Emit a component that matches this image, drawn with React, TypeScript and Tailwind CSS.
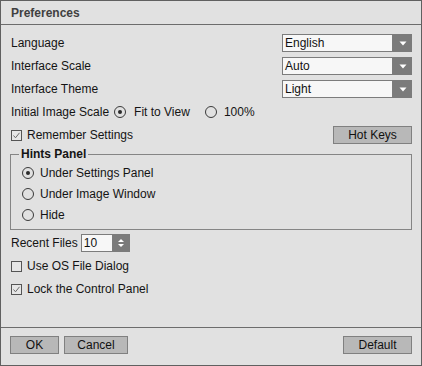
import React from "react";

function Radio({ checked }: { checked?: boolean }) {
  return (
    <span className="w-[12px] h-[12px] rounded-full border border-[#3a3a3a] flex items-center justify-center shrink-0">
      {checked && <span className="w-[4px] h-[4px] rounded-full bg-[#2a2a2a]" />}
    </span>
  );
}

function Check({ checked }: { checked?: boolean }) {
  return (
    <span className="w-[11px] h-[11px] border border-[#555] bg-[#e6e6e6] flex items-center justify-center shrink-0">
      {checked && (
        <svg width="9" height="9" viewBox="0 0 9 9">
          <path d="M1.5 4.5 L3.5 6.8 L7.5 1.8" fill="none" stroke="#6a6a6a" strokeWidth="1" />
        </svg>
      )}
    </span>
  );
}

function Select({ value }: { value: string }) {
  return (
    <div className="w-[130px] h-[18px] flex">
      <div className="flex-1 h-full bg-[#f7f7f7] border border-[#7c7c7c] flex items-center pl-[2px] text-[#111]">
        {value}
      </div>
      <div className="w-[19px] h-full bg-[#7b7b7b] flex items-center justify-center">
        <svg width="8" height="5" viewBox="0 0 8 5">
          <path d="M0.5 0.5 L7.5 0.5 L4 4.5 Z" fill="#ffffff" />
        </svg>
      </div>
    </div>
  );
}

function Btn({ w, children }: { w: string; children: React.ReactNode }) {
  return (
    <div className={`${w} h-[18px] bg-[#b8b8b8] border border-[#808080] flex items-center justify-center text-[#111]`}>
      {children}
    </div>
  );
}

export default function App() {
  return (
    <div className="w-[422px] h-[366px] bg-[#e1e1e1] border border-[#606060] flex flex-col text-[12px] leading-none text-[#141414] font-['Liberation_Sans',Arial,sans-serif]">
      <div className="h-[24px] shrink-0 border-b border-[#6c6c6c] pl-[10px] flex items-center font-bold text-[#404040]">
        Preferences
      </div>
      <div className="flex-1 flex flex-col pl-[9px] pr-[9px] pt-[9px]">
        <div className="h-[18px] flex items-center justify-between">
          <span className="pl-[1px]">Language</span>
          <Select value="English" />
        </div>
        <div className="h-[18px] mt-[5px] flex items-center justify-between">
          <span className="pl-[1px]">Interface Scale</span>
          <Select value="Auto" />
        </div>
        <div className="h-[18px] mt-[5px] flex items-center justify-between">
          <span className="pl-[1px]">Interface Theme</span>
          <Select value="Light" />
        </div>
        <div className="h-[18px] mt-[5px] flex items-center pl-[1px]">
          <span>Initial Image Scale</span>
          <span className="ml-[5px]"><Radio checked /></span>
          <span className="ml-[8px]">Fit to View</span>
          <span className="ml-[15px]"><Radio /></span>
          <span className="ml-[7px]">100%</span>
        </div>
        <div className="h-[18px] mt-[5px] flex items-center justify-between">
          <div className="flex items-center pl-[1px]">
            <Check checked />
            <span className="ml-[5px]">Remember Settings</span>
          </div>
          <Btn w="w-[79px]">Hot Keys</Btn>
        </div>
        <div className="relative mt-[10px] h-[76px] border border-[#858585] pt-[7px] pb-[4px] pl-[11px]">
          <span className="absolute left-[8px] -top-[7px] px-[2px] bg-[#e1e1e1] font-bold text-[#141414]">
            Hints Panel
          </span>
          <div className="h-[21px] flex items-center">
            <Radio checked />
            <span className="ml-[6px]">Under Settings Panel</span>
          </div>
          <div className="h-[21px] flex items-center">
            <Radio />
            <span className="ml-[6px]">Under Image Window</span>
          </div>
          <div className="h-[21px] flex items-center">
            <Radio />
            <span className="ml-[6px]">Hide</span>
          </div>
        </div>
        <div className="h-[18px] mt-[4px] flex items-center pl-[1px]">
          <span>Recent Files</span>
          <div className="ml-[3px] w-[49px] h-[18px] flex">
            <div className="flex-1 bg-[#f7f7f7] border border-[#7c7c7c] flex items-center pl-[2px] text-[#111]">10</div>
            <div className="w-[17px] bg-[#7b7b7b] flex flex-col items-center justify-center gap-[2px]">
              <svg width="6" height="3" viewBox="0 0 6 3">
                <path d="M0 3 L6 3 L3 0 Z" fill="#ffffff" />
              </svg>
              <svg width="6" height="3" viewBox="0 0 6 3">
                <path d="M0 0 L6 0 L3 3 Z" fill="#ffffff" />
              </svg>
            </div>
          </div>
        </div>
        <div className="h-[18px] mt-[5px] flex items-center pl-[1px]">
          <Check />
          <span className="ml-[5px]">Use OS File Dialog</span>
        </div>
        <div className="h-[18px] mt-[5px] flex items-center pl-[1px]">
          <Check checked />
          <span className="ml-[5px]">Lock the Control Panel</span>
        </div>
      </div>
      <div className="h-[38px] shrink-0 border-t border-[#6c6c6c] pt-[8px] px-[9px] flex items-start justify-between">
        <div className="flex gap-[5px]">
          <Btn w="w-[49px]">OK</Btn>
          <Btn w="w-[64px]">Cancel</Btn>
        </div>
        <Btn w="w-[69px]">Default</Btn>
      </div>
    </div>
  );
}
